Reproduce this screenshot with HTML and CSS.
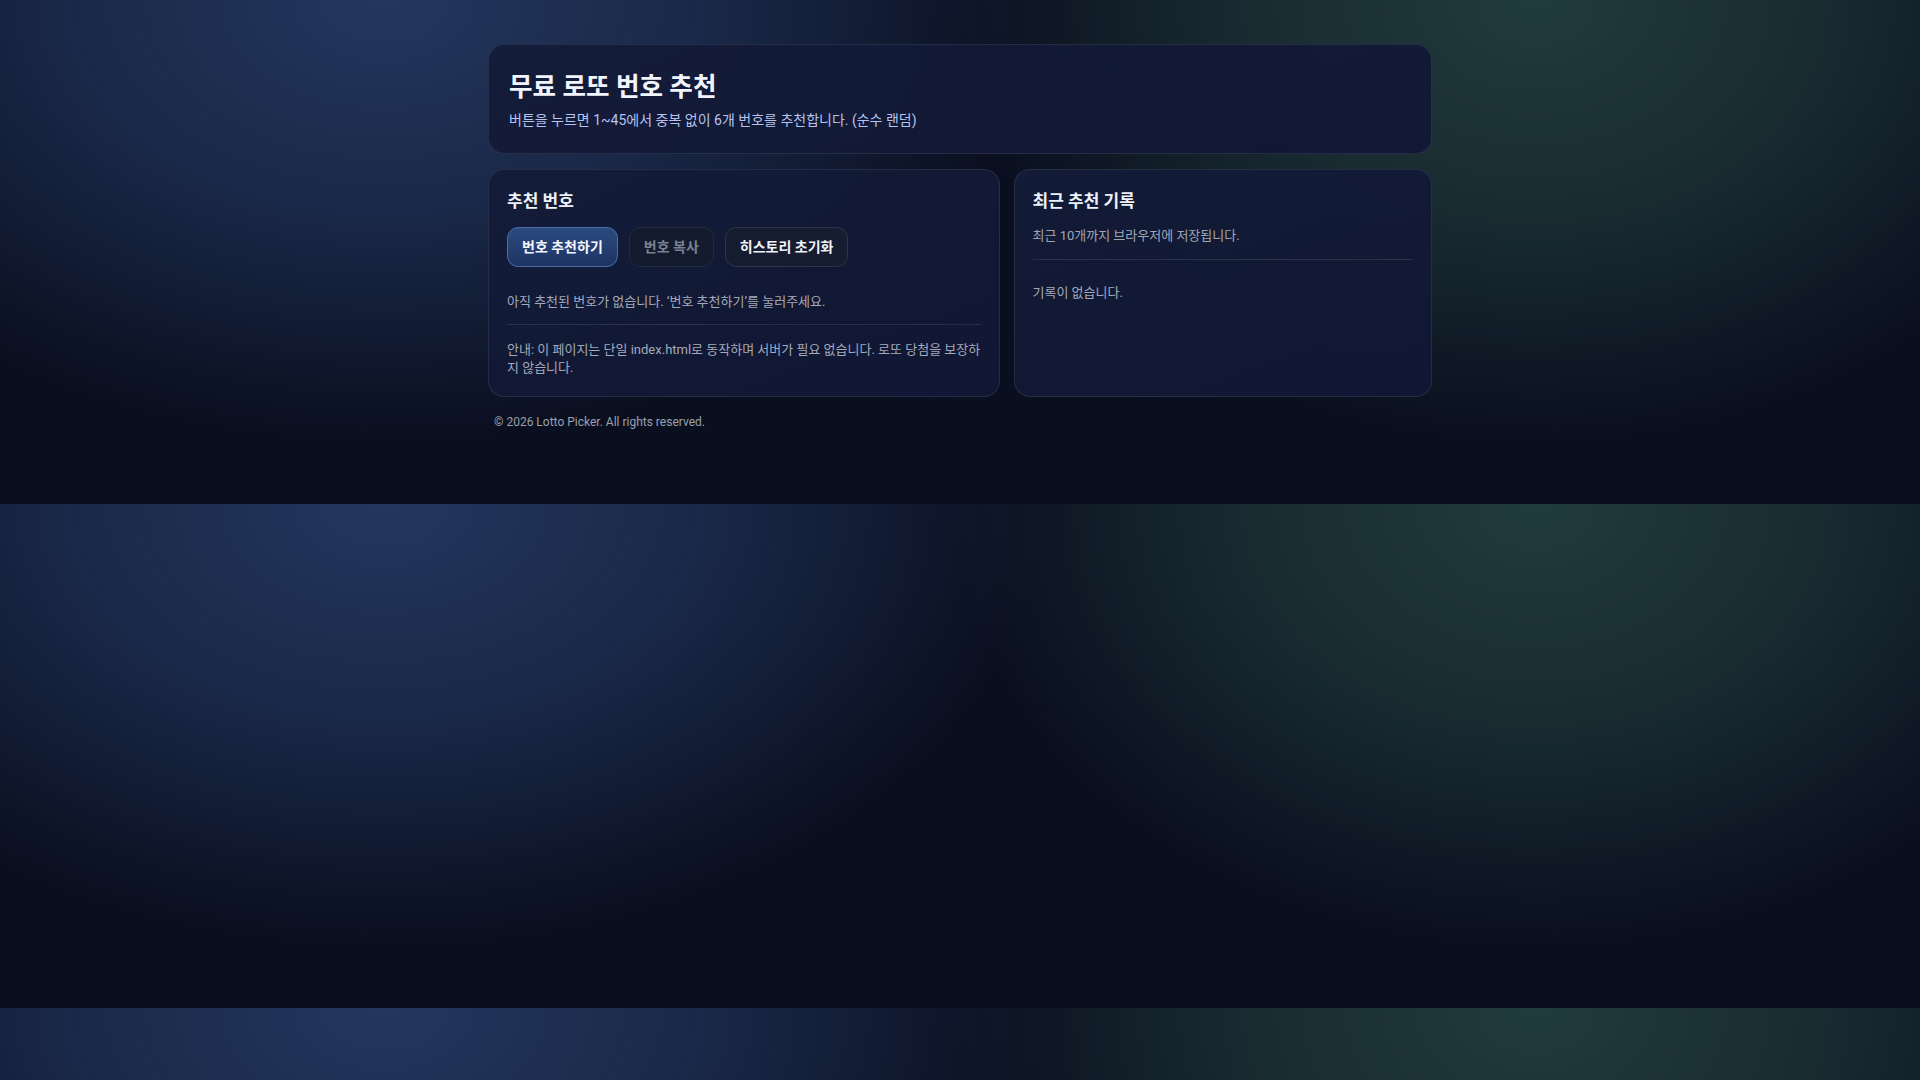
FILE: index.html
```html
<!DOCTYPE html>
<html lang="ko">
<head>
<meta charset="utf-8">
<title>무료 로또 번호 추천</title>
<link rel="stylesheet" href="styles.css">
</head>
<body>
<main class="wrap">
  <header class="card hero">
    <h1 class="hero-title">무료 로또 번호 추천</h1>
    <p class="hero-sub">버튼을 누르면 1~45에서 중복 없이 6개 번호를 추천합니다. (순수 랜덤)</p>
  </header>

  <section class="grid">
    <div class="card panel">
      <h2 class="panel-title">추천 번호</h2>
      <div class="actions">
        <button class="btn btn-primary" type="button">번호 추천하기</button>
        <button class="btn btn-muted" type="button" disabled>번호 복사</button>
        <button class="btn btn-ghost" type="button">히스토리 초기화</button>
      </div>
      <p class="status">아직 추천된 번호가 없습니다. ‘번호 추천하기’를 눌러주세요.</p>
      <hr class="divider divider-main">
      <p class="note">안내: 이 페이지는 단일 index.html로 동작하며 서버가 필요 없습니다. 로또 당첨을 보장하지 않습니다.</p>
    </div>

    <div class="card panel">
      <h2 class="panel-title">최근 추천 기록</h2>
      <p class="hint">최근 10개까지 브라우저에 저장됩니다.</p>
      <hr class="divider divider-side">
      <p class="empty">기록이 없습니다.</p>
    </div>
  </section>

  <footer class="foot">© 2026 Lotto Picker. All rights reserved.</footer>
</main>
</body>
</html>
```

FILE: styles.css
```css
* {
  box-sizing: border-box;
}

html,
body {
  margin: 0;
  padding: 0;
}

body {
  font-family: Roboto, "Noto Sans CJK KR", sans-serif;
  color: #e8ecf6;
  background:
    radial-gradient(660px 440px at 20% 0%, rgba(38, 60, 104, 0.88) 0%, rgba(38, 60, 104, 0.55) 50%, rgba(38, 60, 104, 0) 100%),
    radial-gradient(580px 440px at 80% 0%, rgba(36, 66, 64, 0.88) 0%, rgba(36, 66, 64, 0.55) 50%, rgba(36, 66, 64, 0) 100%),
    #0a0f1f;
}

.wrap {
  max-width: 980px;
  margin: 0 auto;
  padding: 44px 18px 73px;
}

.card {
  border: 1px solid rgba(255, 255, 255, 0.09);
  border-radius: 16px;
  background: linear-gradient(160deg, rgba(19, 28, 56, 0.96), rgba(17, 23, 52, 0.96));
}

/* top banner */
.hero {
  padding: 26px 20px 22px;
}

.hero-title {
  margin: 0 0 7px;
  font-size: 25.6px;
  line-height: 32px;
  font-weight: 700;
  color: #f1f4fc;
}

.hero-sub {
  margin: 0;
  font-size: 14px;
  line-height: 21px;
  color: #b6c2ef;
}

/* two panels */
.grid {
  display: grid;
  grid-template-columns: 11fr 9fr;
  gap: 14px;
  margin-top: 15px;
}

.panel {
  padding: 18px;
}

.panel-title {
  margin: 2px 0 15px;
  font-size: 17px;
  line-height: 1.3;
  font-weight: 700;
  color: #eef1f8;
}

.actions {
  display: flex;
  gap: 11px;
}

.btn {
  font-family: inherit;
  font-size: 14px;
  line-height: 16px;
  font-weight: 700;
  padding: 11px 14px;
  border-radius: 11px;
  border: 1px solid #2d3448;
  background: #161d31;
  color: #f2f4f9;
}

.btn-primary {
  border-color: #4a6cab;
  background: linear-gradient(180deg, #2c4a7f, #1e3463);
  color: #f4f7ff;
}

.btn-muted {
  border-color: #232b3f;
  background: #141b2e;
  color: #7a8193;
}

.status,
.note,
.hint,
.empty {
  margin: 0;
  font-size: 13px;
  line-height: 1.4;
  color: #a4aaba;
}

.status {
  margin-top: 26px;
}

.divider {
  border: 0;
  height: 1px;
  background: rgba(255, 255, 255, 0.1);
  margin: 0;
}

.divider-main {
  margin: 13px 0 16px;
}

.hint {
  margin-top: 0;
  color: #a0a6b6;
}

.divider-side {
  margin: 14px 0 24px;
}

/* page footer */
.foot {
  margin-top: 16px;
  padding: 0 6px;
  font-size: 12px;
  line-height: 18px;
  color: #9aa0ae;
}
```
